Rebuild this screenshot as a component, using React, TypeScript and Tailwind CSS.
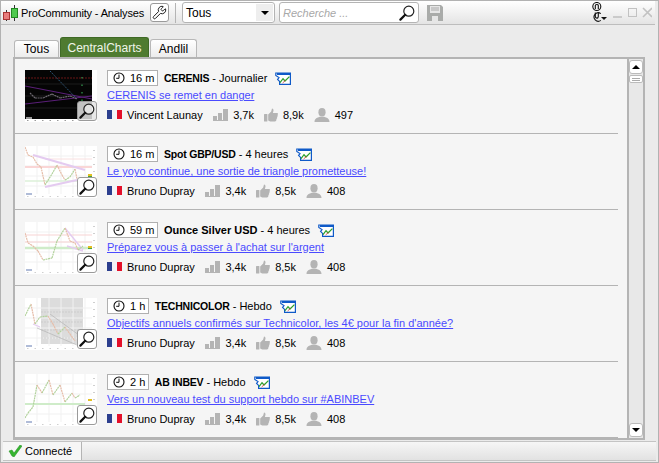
import React from 'react';
import { Wrench } from 'lucide-react';

type Variant = 'dark' | 'triangle' | 'wedge' | 'channel' | 'range';

interface Analysis {
  time: string;
  name: string;
  nameClass: string;
  period: string;
  link: string;
  author: string;
  views: string;
  likes: string;
  followers: string;
  variant: Variant;
}

const analyses: Analysis[] = [
  { time: '16 m', name: 'CERENIS', nameClass: 'text-[10.5px] tracking-[-0.2px]', period: 'Journalier', link: 'CERENIS se remet en danger', author: 'Vincent Launay', views: '3,7k', likes: '8,9k', followers: '497', variant: 'dark' },
  { time: '16 m', name: 'Spot GBP/USD', nameClass: 'text-[10.5px] tracking-[-0.2px]', period: '4 heures', link: 'Le yoyo continue, une sortie de triangle prometteuse!', author: 'Bruno Dupray', views: '3,4k', likes: '8,5k', followers: '408', variant: 'triangle' },
  { time: '59 m', name: 'Ounce Silver USD', nameClass: '', period: '4 heures', link: "Préparez vous à passer à l'achat sur l'argent", author: 'Bruno Dupray', views: '3,4k', likes: '8,5k', followers: '408', variant: 'wedge' },
  { time: '1 h', name: 'TECHNICOLOR', nameClass: 'text-[10.5px] tracking-[-0.2px]', period: 'Hebdo', link: "Objectifs annuels confirmés sur Technicolor, les 4€ pour la fin d'année?", author: 'Bruno Dupray', views: '3,4k', likes: '8,5k', followers: '408', variant: 'channel' },
  { time: '2 h', name: 'AB INBEV', nameClass: 'text-[10.5px] tracking-[-0.2px]', period: 'Hebdo', link: 'Vers un nouveau test du support hebdo sur #ABINBEV', author: 'Bruno Dupray', views: '3,4k', likes: '8,5k', followers: '408', variant: 'range' },
];

const Loupe = ({ size = 16 }: { size?: number }) => (
  <svg width={size} height={size} viewBox="0 0 16 16" fill="none">
    <circle cx="9.8" cy="6.2" r="5" stroke="#222" strokeWidth="1.2" fill="#fff" fillOpacity="0.5" />
    <path d="M6.2 9.8 L1.4 14.6" stroke="#111" strokeWidth="2.2" strokeLinecap="round" />
  </svg>
);

const Clock = () => (
  <svg width="12" height="12" viewBox="0 0 12 12" fill="none">
    <circle cx="6" cy="6" r="5" stroke="#111" strokeWidth="1.1" />
    <path d="M6 2.6 V6.3 H3.2" stroke="#111" strokeWidth="1" />
  </svg>
);

const ChartBadge = () => (
  <svg width="16" height="13" viewBox="0 0 16 13" fill="none">
    <path d="M0.8 1 H15.4 V12.4 H4.6 V9.4 L2.6 7.4 L4 5.6 L0.8 3.4 Z" fill="#fff" stroke="#0f5ac8" strokeWidth="1.2" />
    <path d="M2 2 H15" stroke="#0f5ac8" strokeWidth="2" />
    <path d="M5 10.6 L8 6.6 L10 9 L14.4 4.6" stroke="#2aa02a" strokeWidth="1.2" />
    <path d="M7.6 11 L10.4 8.4" stroke="#d84040" strokeWidth="0.9" />
  </svg>
);

const Flag = () => (
  <span className="flex h-[9px] w-[15px] shrink-0">
    <span className="w-[5px] bg-[#2c3f8e]" />
    <span className="w-[5px] bg-[#f4f4f8]" />
    <span className="w-[5px] bg-[#e3102a]" />
  </span>
);

const BarsIcon = () => (
  <svg width="15" height="12" viewBox="0 0 15 12" fill="#b4b4b4">
    <rect x="0" y="7" width="4" height="4" />
    <rect x="5" y="4" width="4" height="7" />
    <rect x="10" y="0" width="5" height="11" />
    <rect x="0" y="11" width="15" height="1" />
  </svg>
);

const ThumbIcon = () => (
  <svg width="14" height="14" viewBox="0 0 14 14" fill="#b4b4b4">
    <rect x="0" y="6" width="3.4" height="7.5" rx="0.5" />
    <path d="M4.2 6.5 L7.2 3.4 L8 0.4 C9.4 0.4 9.8 2 9.3 3.4 L8.9 5 H13 C14.2 5 14.2 6.6 13.5 7 C14 7.8 13.8 8.6 13 9 C13.4 9.8 13.2 10.6 12.4 11 C12.6 12 12 13.4 11 13.4 H6.2 L4.2 12.5 Z" />
  </svg>
);

const PersonIcon = () => (
  <svg width="16" height="14" viewBox="0 0 16 14" fill="#b4b4b4">
    <ellipse cx="8" cy="4.2" rx="3.6" ry="4.2" />
    <path d="M0.5 14 C0.5 10.5 3.5 9.6 6 8.8 H10 C12.5 9.6 15.5 10.5 15.5 14 Z" />
  </svg>
);

const series: Record<Variant, number[][]> = {
  dark: [[5, 23], [10, 28], [18, 28], [27, 24], [35, 28], [45, 26], [52, 29]],
  triangle: [[0, 1], [3, 9], [8, 11], [12, 18], [16, 21], [20, 39], [27, 28], [32, 19], [37, 29], [40, 34], [45, 31], [50, 23], [52, 33]],
  wedge: [[0, 11], [3, 21], [8, 24], [13, 29], [18, 38], [27, 36], [32, 19], [40, 6], [45, 19], [50, 21], [53, 28], [58, 24]],
  channel: [[0, 18], [6, 6], [10, 26], [15, 19], [23, 18], [28, 26], [33, 36], [40, 29], [45, 36], [50, 43]],
  range: [[0, 44], [3, 39], [8, 33], [12, 11], [17, 19], [24, 6], [28, 21], [35, 11], [40, 28], [47, 19], [50, 24], [55, 21]],
};

// each leg of the line gets one colour: green going up, salmon going down
const PriceLine = ({ variant }: { variant: Variant }) => {
  const pts = series[variant];
  const dark = variant === 'dark';
  return (
    <>
      {pts.slice(1).map(([x, y], i) => {
        const [px, py] = pts[i];
        const stroke = dark ? '#6f6a72' : y < py ? '#b2d29c' : '#e6bda9';
        return <path key={i} d={`M${px} ${py} L${x} ${y}`} stroke={stroke} strokeWidth="1.2" strokeDasharray="2 0.6" />;
      })}
    </>
  );
};

const Thumb = ({ variant }: { variant: Variant }) => {
  const dark = variant === 'dark';
  return (
    <div className="relative h-[52px] w-[72px] shrink-0 bg-white">
      <svg width="72" height="52" viewBox="0 0 72 52" fill="none" className="blur-[0.4px]">
        {dark && <rect x="0" y="0" width="67" height="49" fill="#050505" />}
        {variant === 'channel' && <rect x="16" y="0" width="42" height="46" fill="#dcdcdc" />}
        {!dark && [10, 20, 30, 40].map((y) => <path key={y} d={`M0 ${y} H67`} stroke="#f1f1f1" strokeWidth="1" />)}
        {!dark && [12, 24, 36, 48, 60].map((x) => <path key={x} d={`M${x} 0 V48`} stroke="#f1f1f1" strokeWidth="1" />)}
        {dark && (
          <>
            <path d="M0 8 H67" stroke="#6a1616" strokeWidth="1" strokeDasharray="2 1" />
            {[14, 26, 38].map((y) => <path key={y} d={`M0 ${y} H67`} stroke="#1d1d1d" strokeWidth="1" />)}
            <path d="M0 16 L67 29" stroke="#5a1f78" strokeWidth="1.2" />
            <path d="M0 34 L67 26" stroke="#5a1f78" strokeWidth="1.2" />
            <path d="M25 1 L52 29" stroke="#3b6c96" strokeWidth="0.8" strokeDasharray="1.5 1" />
            <path d="M57 7 V32" stroke="#3fbf60" strokeWidth="1" strokeDasharray="1.5 6" />
          </>
        )}
        {variant === 'triangle' && (
          <>
            <path d="M20 13 H67" stroke="#f9e0e0" strokeWidth="1" />
            <path d="M0 21 H67" stroke="#fad6d6" strokeWidth="2" />
            <path d="M0 35 H67" stroke="#dcf0d8" strokeWidth="1.5" />
            <path d="M8 9 L60 24" stroke="#e4cbf0" strokeWidth="2.2" />
            <path d="M20 41 L52 34" stroke="#e4cbf0" strokeWidth="2.2" />
            <rect x="63" y="28" width="4" height="2" fill="#e4bf22" />
            <rect x="63" y="30" width="4" height="1" fill="#47a33a" />
          </>
        )}
        {variant === 'wedge' && (
          <>
            <path d="M0 13 H67" stroke="#f8d4d4" strokeWidth="1.2" />
            <path d="M0 20 H67" stroke="#f8d4d4" strokeWidth="1.2" />
            <path d="M0 26 H67" stroke="#cfecc9" strokeWidth="2.6" />
            <path d="M40 6 L58 28" stroke="#e4cbf0" strokeWidth="1.4" />
            <path d="M42 24 L58 29" stroke="#e4cbf0" strokeWidth="1.4" />
            <rect x="63" y="24" width="4" height="2" fill="#e4bf22" />
            <rect x="63" y="26" width="4" height="1" fill="#47a33a" />
          </>
        )}
        {variant === 'channel' && (
          <>
            {[14, 24, 32, 40].map((y) => <path key={y} d={`M16 ${y} H58`} stroke="#c6c6c6" strokeWidth="0.7" strokeDasharray="2 1" />)}
            <path d="M25 16 L58 40" stroke="#b4b4b4" strokeWidth="0.7" />
            <path d="M12 30 L52 47" stroke="#b4b4b4" strokeWidth="0.7" />
            <path d="M8 26 L15 29" stroke="#e4cbf0" strokeWidth="1.2" />
          </>
        )}
        {variant === 'range' && (
          <>
            <path d="M0 30 H60" stroke="#cfecc9" strokeWidth="2.2" />
            <rect x="63" y="25" width="4" height="2" fill="#e4bf22" />
          </>
        )}
        <PriceLine variant={variant} />
        {!dark && <path d="M69 4 V44" stroke="#cfcfcf" strokeWidth="2" strokeDasharray="1 6" />}
        <path d="M2 50.5 H67" stroke={dark ? '#9a9a9a' : '#cfcfcf'} strokeWidth="1.2" strokeDasharray="1.5 6" />
        <path d="M1 48 H7" stroke={dark ? '#dcdcdc' : '#8ea0c8'} strokeWidth="1.4" />
      </svg>
      <div className={`absolute bottom-px right-0 flex h-5 w-5 items-center justify-center rounded-[3px] border border-[#9a9a9a] ${dark ? 'bg-[#e4e4e4]/85' : 'bg-white'}`}>
        <Loupe />
      </div>
    </div>
  );
};

const Stat = ({ icon, value }: { icon: React.ReactNode; value: string }) => (
  <span className="flex items-center gap-[5px]">
    {icon}
    <span>{value}</span>
  </span>
);

const Row = ({ item }: { item: Analysis }) => (
  <div className="mr-[9px] flex h-[76px] shrink-0 gap-[10px] border-b border-[#b4b4b4] pl-[10px] pt-3 first:h-[75px] first:pt-[11px]">
    <Thumb variant={item.variant} />
    <div className="flex flex-col">
      <div className="flex h-4 items-center">
        <span className="flex h-4 items-center gap-[5px] border border-[#b0b0b0] bg-white pl-[5px] pr-[3px]">
          <Clock />
          {item.time}
        </span>
        <span className="ml-[5.5px]"><b className={item.nameClass}>{item.name}</b> - {item.period}</span>
        <span className="ml-[8px]"><ChartBadge /></span>
      </div>
      <a className="mt-[2px] h-[15px] text-[#4a4aff] underline">{item.link}</a>
      <div className="mt-[3px] flex h-[17px] items-center">
        <Flag />
        <span className="ml-[5px] mr-[10.5px]">{item.author}</span>
        <span className="flex items-center gap-[10px]">
          <Stat icon={<BarsIcon />} value={item.views} />
          <Stat icon={<ThumbIcon />} value={item.likes} />
          <Stat icon={<PersonIcon />} value={item.followers} />
        </span>
      </div>
    </div>
  </div>
);

const Tab = ({ label, active, className }: { label: string; active?: boolean; className: string }) => (
  <div
    className={`flex items-center justify-center rounded-t-[3px] border border-b-0 text-[12px] ${
      active
        ? 'border-[#3f6a26] bg-[#4f7b30] text-[#f0f5ea]'
        : 'border-[#b8b8b8] bg-gradient-to-b from-white to-[#ececec] text-black'
    } ${className}`}
  >
    {label}
  </div>
);

const LinkIcons = () => (
  <svg width="15" height="21" viewBox="0 0 15 21" fill="none" stroke="#111" strokeWidth="1.1">
    <circle cx="4.8" cy="4.5" r="4" />
    <path d="M3.3 7 V3.6 C3.3 2.2 6.3 2.2 6.3 3.6 V7" />
    <path d="M8.8 11.6 A4.2 4.2 0 1 0 8.8 18.4" />
    <path d="M3.3 10.6 V14.6 C3.3 16.6 6.3 16.6 6.3 14.6 V10.6" />
    <path d="M9 15 H15 L12 18 Z" fill="#111" stroke="none" />
  </svg>
);

export default function App() {
  return (
    <div className="flex h-[463px] w-[659px] flex-col overflow-hidden border border-[#b2b2b2] bg-[#ebebeb] font-['Liberation_Sans',Arial,sans-serif] text-[11px] leading-[14px] text-black">
      <header className="mr-[3px] flex h-[24px] shrink-0 items-center border-b border-[#bdbdbd] bg-gradient-to-b from-white to-[#e4e4e4]">
        <svg width="15" height="18" viewBox="0 0 15 18" className="ml-[2px] shrink-0">
          <path d="M3.5 6 V17 M11.5 1 V17" stroke="#333" strokeWidth="1" />
          <rect x="0.5" y="8.5" width="6" height="7" fill="#e87c7c" stroke="#a33" />
          <rect x="8.5" y="4.5" width="6" height="9" fill="#4fc94f" stroke="#282" />
        </svg>
        <span className="ml-[3px] w-[124px] whitespace-nowrap text-[11px] tracking-[-0.15px]">ProCommunity - Analyses</span>
        <button className="ml-[5px] flex h-[19px] w-[19px] items-center justify-center rounded-[3px] border border-[#9a9a9a] bg-white">
          <Wrench size={15} strokeWidth={1.5} color="#111" />
        </button>
        <span className="ml-[6px] h-[20px] w-px bg-[#b4b4b4]" />
        <div className="ml-[6px] flex h-[21px] w-[93px] items-center justify-between rounded-[3px] border border-[#b4b4b4] bg-white pl-[3px] pr-[1px] text-[12px]">
          <span>Tous</span>
          <span className="flex h-[17px] w-[17px] items-center justify-center bg-[#eeeeee]">
            <span className="h-0 w-0 border-x-[4px] border-t-[4px] border-x-transparent border-t-black" />
          </span>
        </div>
        <div className="ml-[4px] flex h-[21px] w-[140px] items-center justify-between rounded-[3px] border border-[#b4b4b4] bg-white pl-[3px] pr-[3px]">
          <span className="italic text-[#a8a8a8]">Recherche ...</span>
          <Loupe />
        </div>
        <svg width="16" height="16" viewBox="0 0 16 16" className="ml-[8px]" fill="#a9aba9">
          <path d="M0 0 H14 L16 2 V16 H0 Z" />
          <rect x="3" y="1" width="10" height="7" fill="#e6e6e6" />
          <path d="M4 3 H12 M4 5 H12" stroke="#aaa" strokeWidth="1" />
          <rect x="5" y="11" width="6" height="5" fill="#e6e6e6" />
        </svg>
        <span className="ml-auto mr-[3px] flex items-center">
          <LinkIcons />
          <svg width="40" height="12" viewBox="0 0 40 12" fill="none" stroke="#c2c2c2" strokeWidth="1.6" className="ml-[5px]">
            <path d="M1 10 H10" />
            <rect x="16.5" y="1.5" width="8" height="8" strokeWidth="1" />
            <path d="M31 1 L40 10 M40 1 L31 10" />
          </svg>
        </span>
      </header>

      <main className="flex min-h-0 flex-1 flex-col pl-3 pr-[13px] pt-[12px]">
        <div className="flex h-[20px] shrink-0 items-end gap-px pl-px">
          <Tab label="Tous" className="h-[17px] w-[45px]" />
          <Tab label="CentralCharts" active className="h-[20px] w-[89px]" />
          <Tab label="Andlil" className="h-[18px] w-[47px]" />
        </div>
        <div className="flex min-h-0 flex-1 border-2 border-[#b4b4b4] bg-[#f5f5f5]">
          <div className="flex min-w-0 flex-1 flex-col overflow-hidden">
            {analyses.map((item) => (
              <Row key={item.link} item={item} />
            ))}
          </div>
          <div className="flex w-[16px] shrink-0 flex-col items-center border-l-2 border-[#b4b4b4] bg-[#e8e8e8] py-px">
            <div className="flex h-[14px] w-[14px] items-center justify-center rounded-[3px] border border-[#bbb] bg-white">
              <span className="h-0 w-0 border-x-[4px] border-b-[4px] border-x-transparent border-b-black" />
            </div>
            <div className="mt-px flex h-[8px] w-[14px] flex-col justify-center gap-px rounded-[2px] border border-[#bbb] bg-white px-[2px]">
              <span className="h-px bg-[#aaa]" />
              <span className="h-px bg-[#aaa]" />
            </div>
            <div className="mt-auto flex h-[14px] w-[14px] items-center justify-center rounded-[3px] border border-[#bbb] bg-white">
              <span className="h-0 w-0 border-x-[4px] border-t-[4px] border-x-transparent border-t-black" />
            </div>
          </div>
        </div>
      </main>

      <footer className="mb-px ml-[2px] mr-[2px] mt-[1px] flex h-[20px] shrink-0 border-y border-[#c4c4c4] bg-gradient-to-b from-[#f6f6f6] to-[#e2e2e2]">
        <div className="flex w-[79px] items-center gap-[3px] border-r border-[#b4b4b4] bg-[#f6f6f6] pl-[5px]">
          <svg width="14" height="12" viewBox="0 0 14 12">
            <path d="M1 6 L4 5 L6 8 L12 0 L14 1 L6 12 L4 11 Z" fill="#35b52f" stroke="#1f8a1c" strokeWidth="0.5" />
          </svg>
          <span>Connecté</span>
        </div>
      </footer>
    </div>
  );
}
